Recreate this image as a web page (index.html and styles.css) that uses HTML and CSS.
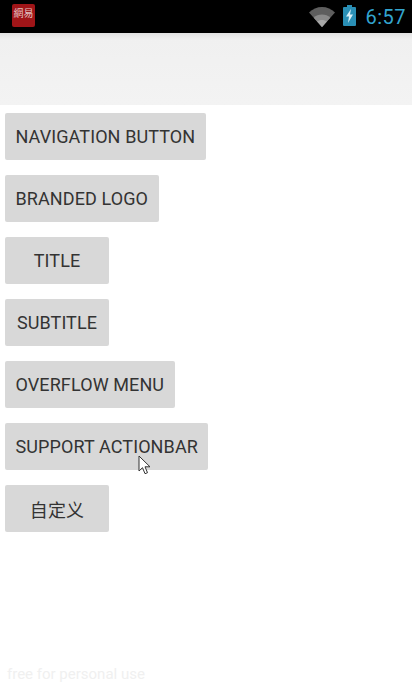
FILE: index.html
```html
<!DOCTYPE html>
<html lang="zh">
<head>
<meta charset="utf-8">
<title>Toolbar</title>
<link rel="stylesheet" href="styles.css">
</head>
<body>
<div class="status-bar">
  <div class="app-logo"><span class="logo-text">網易</span></div>
  <div class="status-right">
    <svg class="wifi" width="26" height="20" viewBox="0 0 26 20"><path d="M13 20 0 5.500C3.500 2 8 0 13 0s9.500 2 13 5.500z" fill="#5e5e5e"/><path d="M13 20 4.700 10.700C6.800 8.800 9.800 7.600 13 7.600s6.200 1.200 8.300 3.100z" fill="#8a8a8a"/><path d="M13 20 8.200 14.600C9.500 13.500 11.200 12.900 13 12.900s3.500.6 4.800 1.700z" fill="#a8a8a8"/></svg>
    <svg class="battery" width="13" height="21" viewBox="0 0 13 21"><path d="M4 0h5v2h3a1 1 0 0 1 1 1v17a1 1 0 0 1-1 1H1a1 1 0 0 1-1-1V3a1 1 0 0 1 1-1h3z" fill="#2a8fb5"/><path d="M8 4 3 11.500h3L5 18l5-8.500H7z" fill="#d8f0f8"/></svg>
    <span class="clock">6:57</span>
  </div>
</div>
<div class="action-bar"></div>
<main class="buttons">
  <button class="btn">NAVIGATION BUTTON</button>
  <button class="btn">BRANDED LOGO</button>
  <button class="btn">TITLE</button>
  <button class="btn">SUBTITLE</button>
  <button class="btn">OVERFLOW MENU</button>
  <button class="btn">SUPPORT ACTIONBAR</button>
  <button class="btn">自定义</button>
</main>
<svg class="cursor" width="14" height="20" viewBox="0 0 14 20"><path d="M1 1v15l3.500-3.300 2.500 6 2.500-1-2.500-5.900h5z" fill="#fff" stroke="#333" stroke-width="1"/></svg>
<div class="watermark">free for personal use</div>
</body>
</html>
```
FILE: styles.css
```css
* { box-sizing: border-box; }
html, body { margin: 0; padding: 0; }
body {
  position: relative;
  width: 412px;
  height: 688px;
  overflow: hidden;
  background: #fff;
  font-family: Roboto, "Noto Sans CJK SC", sans-serif;
}
.status-bar {
  height: 33px;
  background: #000;
  display: flex;
  align-items: center;
  justify-content: space-between;
  padding: 0 6px 0 12px;
}
.app-logo {
  width: 23px;
  height: 23px;
  margin-bottom: 2px;
  padding-bottom: 5px;
  background: #a01518;
  border-radius: 2px;
  display: flex;
  align-items: center;
  justify-content: center;
}
.logo-text {
  font-family: "Noto Sans CJK TC", sans-serif;
  font-size: 10px;
  line-height: 1;
  color: #e2c0c0;
  white-space: nowrap;
}
.status-right { display: flex; align-items: center; }
.wifi { margin-right: 8px; }
.battery { margin-right: 9px; margin-bottom: 2px; }
.clock {
  font-size: 20px;
  letter-spacing: 0.5px;
  color: #33a5cf;
}
.action-bar {
  height: 72px;
  background: linear-gradient(#e2e2e2 0, #f0f0f0 6px, #f3f3f3 100%);
}
.buttons {
  display: flex;
  flex-direction: column;
  align-items: flex-start;
  gap: 15px;
  padding: 8px 0 0 5px;
}
.btn {
  height: 47px;
  min-width: 104px;
  padding: 0 10.500px;
  border: 0;
  border-radius: 2px;
  background: #d8d8d8;
  color: #333;
  font-family: inherit;
  font-size: 18px;
  letter-spacing: 0.1px;
  white-space: nowrap;
  text-align: center;
}
.cursor {
  position: absolute;
  left: 138px;
  top: 455px;
}
.watermark {
  position: absolute;
  left: 7px;
  top: 665px;
  font-size: 15px;
  color: #f0f0f0;
  white-space: nowrap;
}
```
